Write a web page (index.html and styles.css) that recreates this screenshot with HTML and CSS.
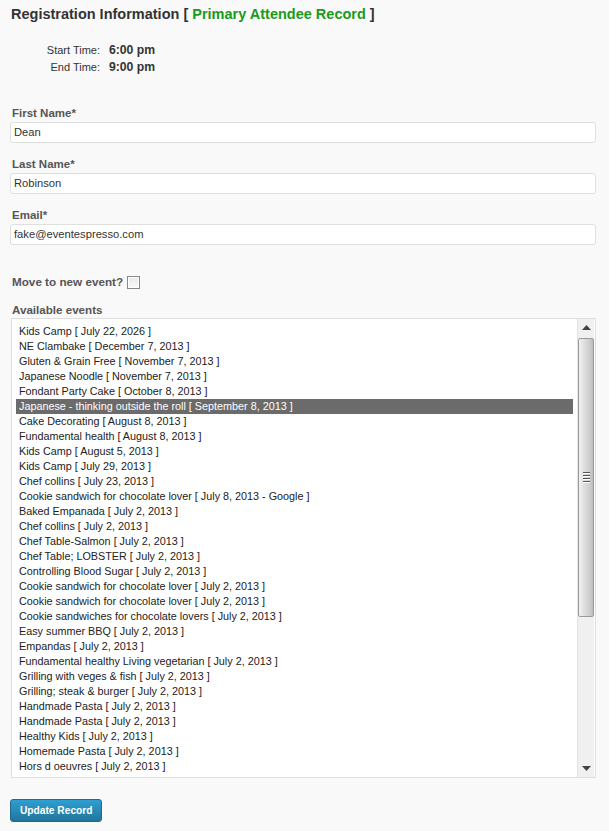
FILE: index.html
```html
<!DOCTYPE html>
<html>
<head>
<meta charset="utf-8">
<link rel="stylesheet" href="styles.css">
</head>
<body>
<div class="page">
  <h3 class="title">Registration Information <span class="br">[</span> <span class="green">Primary Attendee Record</span> <span class="br">]</span></h3>
  <div class="times">
    <span class="tlabel">Start Time:</span><span class="tval">6:00 pm</span>
    <span class="tlabel">End Time:</span><span class="tval">9:00 pm</span>
  </div>
  <div class="fields">
    <div class="field">
      <label class="flabel">First Name*</label>
      <div class="input">Dean</div>
    </div>
    <div class="field">
      <label class="flabel">Last Name*</label>
      <div class="input">Robinson</div>
    </div>
    <div class="field">
      <label class="flabel">Email*</label>
      <div class="input">fake@eventespresso.com</div>
    </div>
  </div>
  <div class="move">Move to new event? <span class="check"></span></div>
  <div class="avail">Available events</div>
  <div class="listbox">
    <div class="items">
      <div class="item">Kids Camp [ July 22, 2026 ]</div>
      <div class="item">NE Clambake [ December 7, 2013 ]</div>
      <div class="item">Gluten &amp; Grain Free [ November 7, 2013 ]</div>
      <div class="item">Japanese Noodle [ November 7, 2013 ]</div>
      <div class="item">Fondant Party Cake [ October 8, 2013 ]</div>
      <div class="item sel">Japanese - thinking outside the roll [ September 8, 2013 ]</div>
      <div class="item">Cake Decorating [ August 8, 2013 ]</div>
      <div class="item">Fundamental health [ August 8, 2013 ]</div>
      <div class="item">Kids Camp [ August 5, 2013 ]</div>
      <div class="item">Kids Camp [ July 29, 2013 ]</div>
      <div class="item">Chef collins [ July 23, 2013 ]</div>
      <div class="item">Cookie sandwich for chocolate lover [ July 8, 2013 - Google ]</div>
      <div class="item">Baked Empanada [ July 2, 2013 ]</div>
      <div class="item">Chef collins [ July 2, 2013 ]</div>
      <div class="item">Chef Table-Salmon [ July 2, 2013 ]</div>
      <div class="item">Chef Table; LOBSTER [ July 2, 2013 ]</div>
      <div class="item">Controlling Blood Sugar [ July 2, 2013 ]</div>
      <div class="item">Cookie sandwich for chocolate lover [ July 2, 2013 ]</div>
      <div class="item">Cookie sandwich for chocolate lover [ July 2, 2013 ]</div>
      <div class="item">Cookie sandwiches for chocolate lovers [ July 2, 2013 ]</div>
      <div class="item">Easy summer BBQ [ July 2, 2013 ]</div>
      <div class="item">Empandas [ July 2, 2013 ]</div>
      <div class="item">Fundamental healthy Living vegetarian [ July 2, 2013 ]</div>
      <div class="item">Grilling with veges &amp; fish [ July 2, 2013 ]</div>
      <div class="item">Grilling; steak &amp; burger [ July 2, 2013 ]</div>
      <div class="item">Handmade Pasta [ July 2, 2013 ]</div>
      <div class="item">Handmade Pasta [ July 2, 2013 ]</div>
      <div class="item">Healthy Kids [ July 2, 2013 ]</div>
      <div class="item">Homemade Pasta [ July 2, 2013 ]</div>
      <div class="item">Hors d oeuvres [ July 2, 2013 ]</div>
    </div>
    <div class="sbar">
      <div class="sbtn"><svg width="9" height="5" viewBox="0 0 9 5"><path d="M4.5 0 L9 5 L0 5 Z" fill="#444"/></svg></div>
      <div class="track">
        <div class="thumb"><span class="grip"></span><span class="grip"></span><span class="grip"></span><span class="grip"></span></div>
      </div>
      <div class="sbtn"><svg width="9" height="5" viewBox="0 0 9 5"><path d="M0 0 L9 0 L4.5 5 Z" fill="#444"/></svg></div>
    </div>
  </div>
  <div class="btnrow"><button class="btn">Update Record</button></div>
</div>
</body>
</html>
```
FILE: styles.css
```css
html, body {
  margin: 0;
  padding: 0;
  background: #f9f9f9;
}
body {
  font-family: "Liberation Sans", Arial, sans-serif;
  color: #333;
}
.page {
  padding: 4px 13px 0 11px;
}
.title {
  margin: 0;
  font-size: 14.5px;
  font-weight: bold;
  color: #333;
  line-height: 20px;
}
.title .green { color: #1a9a1a; }
.title .br { color: #333; }
.times {
  display: grid;
  grid-template-columns: 89px auto;
  column-gap: 9px;
  margin-top: 18px;
  align-items: center;
}
.tlabel {
  font-size: 11px;
  color: #333;
  text-align: right;
  line-height: 17px;
}
.tval {
  font-size: 12.2px;
  font-weight: bold;
  color: #333;
  line-height: 17px;
}
.fields {
  margin-top: 29px;
  display: flex;
  flex-direction: column;
  gap: 13px;
}
.flabel {
  display: block;
  font-size: 11.5px;
  font-weight: bold;
  color: #555;
  line-height: 16px;
  margin-left: 1px;
}
.input {
  margin-top: 1px;
  margin-left: -1px;
  height: 19px;
  border: 1px solid #dfdfdf;
  border-radius: 3px;
  background: #fff;
  font-size: 11.2px;
  line-height: 19px;
  padding: 0 3px;
  color: #333;
}
.move {
  margin-top: 29px;
  font-size: 11.7px;
  font-weight: bold;
  color: #555;
  line-height: 16px;
  display: flex;
  align-items: center;
  gap: 4px;
  margin-left: 1px;
}
.check {
  display: inline-block;
  width: 11px;
  height: 11px;
  border: 1px solid #888;
  background: linear-gradient(#e8e8e8, #f8f8f8);
  box-shadow: inset 0 0 0 1px #fff;
}
.avail {
  margin-top: 12px;
  font-size: 11.6px;
  font-weight: bold;
  color: #555;
  line-height: 16px;
  margin-left: 1px;
}
.listbox {
  display: flex;
  border: 1px solid #dfdfdf;
  background: #fff;
  height: 458px;
  overflow: hidden;
}
.items {
  flex: 1;
  padding: 5px 4px 0 4px;
  overflow: hidden;
}
.item {
  font-size: 10.8px;
  line-height: 15px;
  height: 15px;
  padding-left: 3px;
  color: #222;
  white-space: nowrap;
}
.item.sel {
  background: #6b6b6b;
  color: #fff;
}
.sbar {
  width: 16px;
  display: flex;
  flex-direction: column;
  background: #f0f0f0;
  border-left: 1px solid #e4e4e4;
  margin-right: 1px;
}
.sbtn {
  height: 17px;
  display: flex;
  align-items: center;
  justify-content: center;
}
.track {
  flex: 1;
  padding-top: 2px;
}
.thumb {
  height: 279px;
  border: 1px solid #9a9a9a;
  border-radius: 2px;
  background: linear-gradient(to right, #f2f2f2 0%, #e2e2e2 30%, #d0d0d0 70%, #bdbdbd 100%);
  display: flex;
  flex-direction: column;
  align-items: center;
  justify-content: center;
  gap: 1px;
  box-sizing: border-box;
}
.grip {
  display: block;
  width: 7px;
  height: 1px;
  background: #555;
  border-bottom: 1px solid #fff;
}
.btnrow {
  margin-top: 21px;
  margin-left: -1px;
}
.btn {
  font-family: "Liberation Sans", Arial, sans-serif;
  font-size: 10.2px;
  font-weight: bold;
  color: #fff;
  background: linear-gradient(#2e9fd2, #21759b);
  border: 1px solid #1e6a8d;
  border-radius: 3px;
  height: 23px;
  padding: 0 9px;
  line-height: 21px;
}
```
